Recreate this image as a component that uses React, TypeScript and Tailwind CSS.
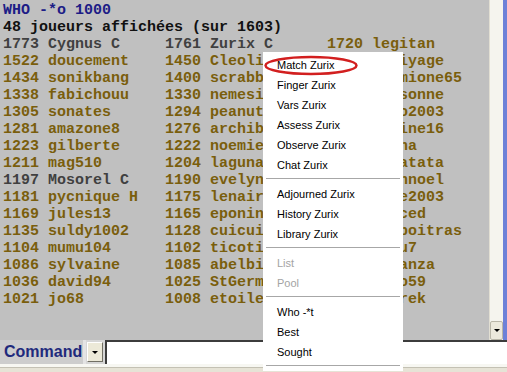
import React from 'react'

const GRAY = 'text-[#404040]'
const OLIVE = 'text-[#7a5e0c]'

type Cell = [number, string, string]

const rows: Cell[][] = [
  [[1773, 'Cygnus C', GRAY], [1761, 'Zurix C', GRAY], [1720, 'legitan', OLIVE]],
  [[1522, 'doucement', OLIVE], [1450, 'Cleolie', OLIVE], [1440, 'coliyage', OLIVE]],
  [[1434, 'sonikbang', OLIVE], [1400, 'scrabble', OLIVE], [1350, 'hermione65', OLIVE]],
  [[1338, 'fabichouu', OLIVE], [1330, 'nemesis', OLIVE], [1316, 'personne', OLIVE]],
  [[1305, 'sonates', OLIVE], [1294, 'peanut', OLIVE], [1288, 'bobo2003', OLIVE]],
  [[1281, 'amazone8', OLIVE], [1276, 'archibald', OLIVE], [1250, 'marine16', OLIVE]],
  [[1223, 'gilberte', OLIVE], [1222, 'noemie', OLIVE], [1215, 'lorna', OLIVE]],
  [[1211, 'mag510', OLIVE], [1204, 'laguna', OLIVE], [1200, 'patatata', OLIVE]],
  [[1197, 'Mosorel C', GRAY], [1190, 'evelyne', OLIVE], [1185, 'jeannoel', OLIVE]],
  [[1181, 'pycnique H', OLIVE], [1175, 'lenaire', OLIVE], [1172, 'rene2003', OLIVE]],
  [[1169, 'jules13', OLIVE], [1165, 'eponine', OLIVE], [1150, 'forced', OLIVE]],
  [[1135, 'suldy1002', OLIVE], [1128, 'cuicui', OLIVE], [1110, 'lucpoitras', OLIVE]],
  [[1104, 'mumu104', OLIVE], [1102, 'ticoti', OLIVE], [1090, 'lulu7', OLIVE]],
  [[1086, 'sylvaine', OLIVE], [1085, 'abelbis', OLIVE], [1050, 'bonanza', OLIVE]],
  [[1036, 'david94', OLIVE], [1025, 'StGermain', OLIVE], [1022, 'nico59', OLIVE]],
  [[1021, 'jo68', OLIVE], [1008, 'etoile', OLIVE], [1003, 'henrek', OLIVE]],
]

type Item = { label: string; disabled?: boolean } | 'sep'

const menu: Item[] = [
  { label: 'Match Zurix' },
  { label: 'Finger Zurix' },
  { label: 'Vars Zurix' },
  { label: 'Assess Zurix' },
  { label: 'Observe Zurix' },
  { label: 'Chat Zurix' },
  'sep',
  { label: 'Adjourned Zurix' },
  { label: 'History Zurix' },
  { label: 'Library Zurix' },
  'sep',
  { label: 'List', disabled: true },
  { label: 'Pool', disabled: true },
  'sep',
  { label: 'Who -*t' },
  { label: 'Best' },
  { label: 'Sought' },
  'sep',
]

function ContextMenu() {
  return (
    <div className="absolute left-[263px] top-[52px] w-[140px] bg-white pt-[3px] font-['Liberation_Sans',Arial,sans-serif] text-[11px] text-black">
      {menu.map((item, i) =>
        item === 'sep' ? (
          <div key={i} className="h-[9px] px-[3px] pt-[3px]">
            <div className="h-px bg-[#a7a7a7]" />
          </div>
        ) : (
          <div
            key={i}
            className={`flex h-[20px] items-center pl-[14px] ${item.disabled ? 'text-[#a3a3a3]' : ''}`}
          >
            {item.label}
          </div>
        )
      )}
      {/* red circle drawn round the first entry */}
      <svg className="absolute left-[1px] top-[2px]" width="96" height="22" viewBox="0 0 96 22">
        <ellipse cx="47" cy="11.5" rx="45.5" ry="8.5" fill="none" stroke="#d21f1f" strokeWidth="2.5" />
      </svg>
    </div>
  )
}

export default function App() {
  return (
    <div className="relative h-[372px] w-[507px] overflow-hidden bg-[#ece9d8]">
      <div className="flex h-[340px]">
        <div className="flex-1 bg-[#c0c0c0] pl-[3px] pt-[2px] font-['Liberation_Mono','Courier_New',monospace] text-[15px] font-bold leading-[17px] whitespace-pre">
          <div className="text-[#1c1c86]">WHO -*o 1000</div>
          <div className="text-[#111]">48 joueurs affichées (sur 1603)</div>
          {rows.map((row, i) => (
            <div key={i} className="flex">
              {row.map(([r, n, c], j) => (
                <span key={j} className={`${c} ${j < 2 ? 'w-[162px] shrink-0' : ''}`}>
                  {r} {n}
                </span>
              ))}
            </div>
          ))}
        </div>
        <div className="flex w-[14px] flex-col border-l border-[#e2dfd3] bg-[#f5f4ee]">
          <div className="flex-1" />
          <div className="flex h-[19px] items-center justify-center rounded-[2px] border border-[#b9b6a8] bg-[#ece9dc]">
            <div className="h-0 w-0 border-x-[3px] border-t-[3px] border-x-transparent border-t-black" />
          </div>
        </div>
        <div className="w-[4px] bg-[#6d81d8]" />
      </div>
      <div className="flex h-[24px]">
        <div className="flex w-[86px] items-center bg-[#cdcdcd]">
          <div className="w-[83px] overflow-hidden pl-[4px] font-['Liberation_Sans',Arial,sans-serif] text-[16px] font-bold leading-none text-[#1f2a7c]">
            Command
          </div>
          <div className="h-full w-[3px] bg-[#e4e4e4]" />
        </div>
        <div className="flex h-[24px] w-[19px] items-center bg-[#d6d6d6] pl-px">
          <div className="flex h-[20px] w-[16px] items-center justify-center border border-b-[#716f64] border-l-white border-r-[#716f64] border-t-white bg-[#ece9d8]">
            <div className="h-0 w-0 border-x-[3px] border-t-[3px] border-x-transparent border-t-black" />
          </div>
        </div>
        <div className="flex-1 border-l-2 border-t-2 border-[#3c3c3c] bg-white" />
      </div>
      <div className="h-[8px] border-t-[3px] border-[#f7f7f2] bg-[#e6e3d6]">
        <div className="h-px bg-[#c4c1b4]" />
      </div>
      <ContextMenu />
    </div>
  )
}
